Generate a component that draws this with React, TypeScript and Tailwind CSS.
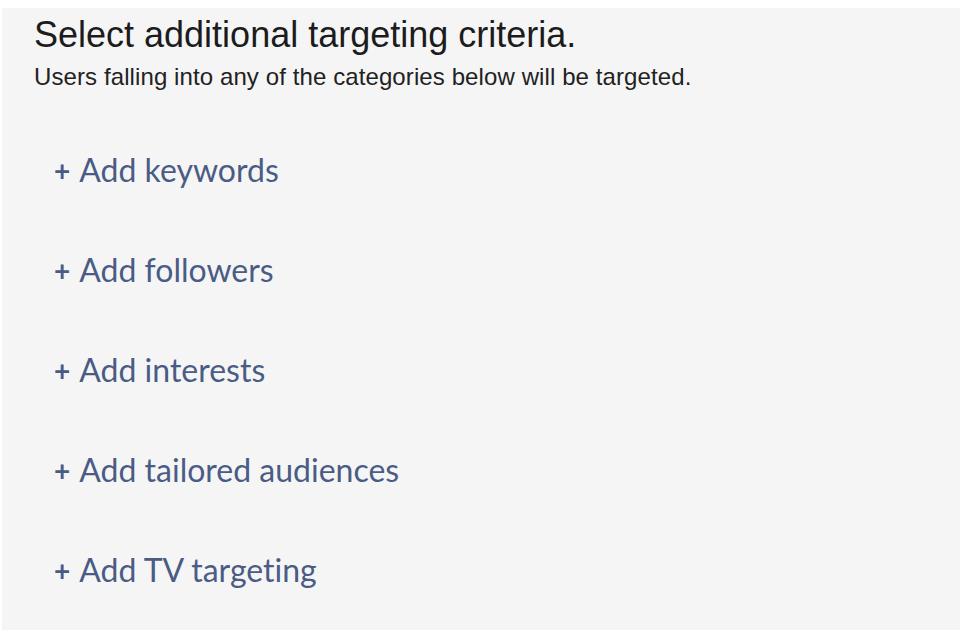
import React from "react";

const links = [
  "Add keywords",
  "Add followers",
  "Add interests",
  "Add tailored audiences",
  "Add TV targeting",
];

export default function App() {
  return (
    <div className="w-[974px] h-[638px] bg-white pt-[8px] pl-[2px]">
      <div className="w-[958px] h-[622px] bg-[#f6f5f5] pl-[32px] pt-[5px]">
        <h1 className="text-[36px] leading-[44px] text-[#1c1c1c] font-['Liberation_Sans',sans-serif]">
          Select additional targeting criteria.
        </h1>
        <p className="mt-[5px] text-[24px] leading-[30px] text-[#222] font-['Liberation_Sans',sans-serif] tracking-[0.1px]">
          Users falling into any of the categories below will be targeted.
        </p>
        <div className="flex flex-col pl-[20px] pt-[58px] gap-[60px]">
          {links.map((l) => (
            <div
              key={l}
              className="text-[32px] leading-[40px] text-[#4a5c85] font-['Lato',sans-serif] [font-variant-ligatures:none] flex items-center"
            >
              <span className="mr-[9px] font-bold text-[28px]">+</span>
              <span>{l}</span>
            </div>
          ))}
        </div>
      </div>
    </div>
  );
}
